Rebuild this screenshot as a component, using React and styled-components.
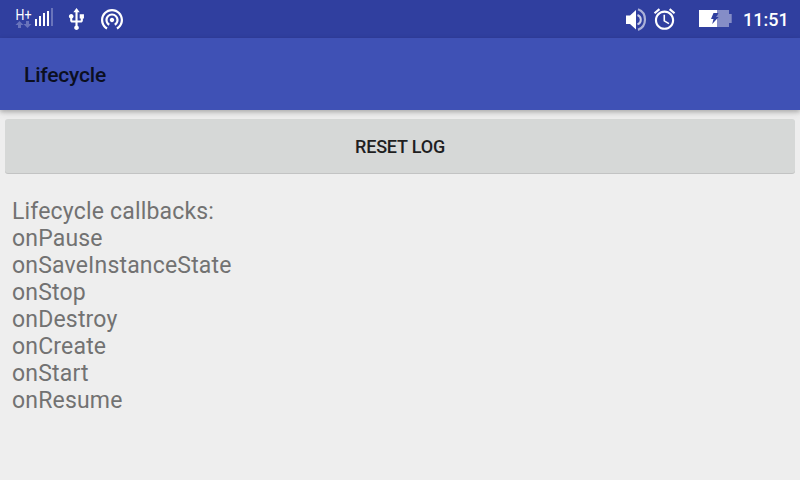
import React from 'react';
import styled, { createGlobalStyle } from 'styled-components';

const GlobalStyle = createGlobalStyle`
  * { box-sizing: border-box; }
  body { margin: 0; background: #eeeeee; font-family: Roboto, sans-serif; }
`;

const Screen = styled.div`
  width: 800px;
  height: 480px;
  display: flex;
  flex-direction: column;
  overflow: hidden;
  background: #eeeeee;
`;

const StatusBar = styled.header`
  flex: none;
  height: 38px;
  display: flex;
  justify-content: space-between;
  padding: 0 12px 0 14px;
  background: #303f9f;
  color: #fff;
`;

const StatusGroup = styled.div`
  display: flex;
  align-items: center;
`;

const StatusIcon = styled.svg`
  display: block;
  flex: none;
  width: ${(p) => p.$width}px;
  height: 38px;
  margin-right: ${(p) => p.$gap || 0}px;
  fill: #fff;
`;

const NetworkType = styled.text`
  font-size: 15px;
  font-weight: 400;
`;

const Clock = styled.time`
  width: 45px;
  font-size: 18px;
  font-weight: 500;
  line-height: 38px;
  padding-top: 1px;
  white-space: nowrap;
`;

const AppBar = styled.div`
  flex: none;
  z-index: 1;
  height: 72px;
  display: flex;
  align-items: center;
  padding: 2px 24px 0;
  background: #3f51b5;
  box-shadow: 0 2px 4px rgba(0, 0, 0, 0.2), 0 3px 8px rgba(0, 0, 0, 0.1);
`;

const Title = styled.h1`
  margin: 0;
  font-size: 21px;
  font-weight: 500;
  line-height: 26px;
  letter-spacing: -0.2px;
  color: #0b0f1f;
`;

const Content = styled.main`
  display: flex;
  flex-direction: column;
  padding: 9px 5px 0;
`;

const ResetButton = styled.button`
  height: 54px;
  border: 0;
  border-radius: 3px;
  padding: 2px 0 0;
  background: #d6d8d7;
  box-shadow: 0 1px 0 #c2c3c3;
  color: #1f1f1f;
  font: 500 18px/22px Roboto, sans-serif;
  letter-spacing: -0.18px;
`;

const Log = styled.div`
  padding: 25px 7px 0;
  color: #727272;
  font-size: 23px;
  line-height: 27px;
  letter-spacing: 0.18px;
`;

const callbacks = [
  'onPause', 'onSaveInstanceState', 'onStop', 'onDestroy',
  'onCreate', 'onStart', 'onResume',
];

const SignalIcon = () => (
  <StatusIcon $width={40} $gap={14} viewBox="14 0 40 38">
    <NetworkType x="15.6" y="19.500" textLength="16" lengthAdjust="spacingAndGlyphs">H+</NetworkType>
    <g fill="#6974bb">
      <path d="M19.5 21l4 4h-2.5v3h-3v-3h-2.500zM27.500 28l4-4h-2.500v-3h-3v3h-2.500z" />
      <path d="M51 8h2v18h-2z" />
    </g>
    <path d="M35 19h2v7h-2zM39 16h2v10h-2zM43 13h2v13h-2zM47 11h2v15h-2z" />
  </StatusIcon>
);

const UsbIcon = () => (
  <StatusIcon $width={18} $gap={14} viewBox="68 0 18 38">
    <path transform="translate(63.800 7) scale(1.06 1.04)" d="M15 7v4h1v2h-3V5h2l-3-4-3 4h2v8H8v-2.070c.7-.37 1.200-1.080 1.200-1.930 0-1.210-.99-2.200-2.200-2.200-1.210 0-2.200.99-2.200 2.200 0 .85.5 1.560 1.200 1.930V13c0 1.110.89 2 2 2h3v3.050c-.71.37-1.200 1.100-1.200 1.950 0 1.220.99 2.200 2.200 2.200 1.210 0 2.200-.98 2.200-2.200 0-.85-.49-1.580-1.200-1.950V15h3c1.110 0 2-.89 2-2v-2h1V7h-4z" />
  </StatusIcon>
);

const HotspotIcon = () => (
  <StatusIcon $width={24} viewBox="100 0 24 38">
    <path transform="translate(98.800 5.700) scale(1.100)" d="M12 11c-1.100 0-2 .9-2 2s.9 2 2 2 2-.9 2-2-.9-2-2-2zm6 2c0-3.310-2.690-6-6-6s-6 2.690-6 6c0 2.220 1.210 4.150 3 5.190l1-1.740c-1.190-.7-2-1.970-2-3.450 0-2.210 1.790-4 4-4s4 1.790 4 4c0 1.480-.81 2.750-2 3.450l1 1.740c1.790-1.040 3-2.970 3-5.190zM12 3C6.480 3 2 7.480 2 13c0 3.700 2.010 6.920 4.990 8.650l1-1.730C5.610 18.530 4 15.960 4 13c0-4.420 3.580-8 8-8s8 3.580 8 8c0 2.960-1.610 5.530-4 6.920l1 1.730c2.990-1.730 5-4.950 5-8.650 0-5.520-4.480-10-10-10z" />
  </StatusIcon>
);

const VolumeIcon = () => (
  <StatusIcon $width={22} $gap={5} viewBox="625 0 22 38">
    <path d="M626 15.500h4l6-5.500v19.500L630 24H626z" />
    <g fill="none" stroke="#fff">
      <path d="M637.500 15q3.300 1.200 3.300 4.700t-3.300 4.700" strokeWidth="2" opacity=".75" />
      <path d="M638 9.200c9.300 3.500 9.300 17.200 0 20.700" strokeWidth="2.200" opacity=".6" />
    </g>
  </StatusIcon>
);

const AlarmIcon = () => (
  <StatusIcon $width={25} $gap={21} viewBox="652 0 25 38">
    <path transform="translate(651.700 6.300) scale(1.070)" d="M22 5.720l-4.600-3.860-1.290 1.530 4.600 3.860L22 5.720zM7.880 3.390L6.600 1.860 2 5.710l1.290 1.530 4.590-3.850zM12.500 8H11v6l4.750 2.850.75-1.230-4-2.370V8zM12 4c-4.970 0-9 4.030-9 9s4.020 9 9 9c4.970 0 9-4.030 9-9s-4.030-9-9-9zm0 16c-3.870 0-7-3.130-7-7s3.130-7 7-7 7 3.130 7 7-3.130 7-7 7z" />
  </StatusIcon>
);

const BatteryIcon = () => (
  <StatusIcon $width={34} $gap={11} viewBox="698 0 34 38">
    <path d="M699 10h18v17h-18z" />
    <path d="M717 10h12v4h2.700v9H729v4h-12z" fill="#858dc7" />
    <path d="M713.500 13h5l-2 4h2.200l-6.500 7 1.300-5H711z" fill="#303f9f" />
  </StatusIcon>
);

export default function App() {
  return (
    <Screen>
      <GlobalStyle />
      <StatusBar>
        <StatusGroup>
          <SignalIcon />
          <UsbIcon />
          <HotspotIcon />
        </StatusGroup>
        <StatusGroup>
          <VolumeIcon />
          <AlarmIcon />
          <BatteryIcon />
          <Clock>11:51</Clock>
        </StatusGroup>
      </StatusBar>
      <AppBar><Title>Lifecycle</Title></AppBar>
      <Content>
        <ResetButton type="button">RESET LOG</ResetButton>
        <Log>
          <div>Lifecycle callbacks:</div>
          {callbacks.map((name) => <div key={name}>{name}</div>)}
        </Log>
      </Content>
    </Screen>
  );
}
